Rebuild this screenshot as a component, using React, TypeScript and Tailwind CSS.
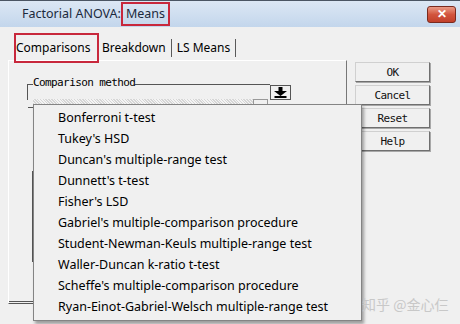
import React from 'react';

const methods = [
  'Bonferroni t-test',
  "Tukey's HSD",
  "Duncan's multiple-range test",
  "Dunnett's t-test",
  "Fisher's LSD",
  "Gabriel's multiple-comparison procedure",
  'Student-Newman-Keuls multiple-range test',
  'Waller-Duncan k-ratio t-test',
  "Scheffe's multiple-comparison procedure",
  'Ryan-Einot-Gabriel-Welsch multiple-range test',
];

// Windows-Knopf mit Monospace-Beschriftung
function DlgButton({ label }: { label: string }) {
  return (
    <div className="w-[75px] h-[20px] flex items-center justify-center bg-[#f0f0f0] border border-[#d0d0d0] border-r-[#6f6f6f] border-b-[#6f6f6f] shadow-[1px_1px_0_#a8a8a8] font-['DejaVu_Sans_Mono',monospace] text-[11px] tracking-[-0.6px] leading-none text-[#111]">
      {label}
    </div>
  );
}

function DropArrow() {
  return (
    <svg width="19" height="13" viewBox="0 0 19 13">
      <rect x="7.5" y="1" width="4" height="4" fill="#000" />
      <polygon points="3,5 16,5 9.5,10" fill="#000" />
      <rect x="3.5" y="10" width="12" height="2" fill="#000" />
    </svg>
  );
}

export default function App() {
  return (
    <div className="relative w-[460px] h-[324px] overflow-hidden bg-[#f0f0f0] font-['Noto_Sans',sans-serif] text-black">
      {/* Titelleiste */}
      <div className="h-[27px] border-t border-[#4b5563] bg-gradient-to-b from-[#dce7f4] to-[#c3d6ec] flex items-center justify-between">
        <div className="pl-[22px] flex items-center text-[12.5px] text-[#1c2a3c] leading-none">
          <span>Factorial ANOVA:</span>
          <span className="h-[24px] px-[3px] flex items-center border-2 border-[#c8283c]">Means</span>
        </div>
        <div className="mr-[4px] w-[29px] h-[17px] rounded-[3px] border border-[#7a2a1e] bg-gradient-to-b from-[#e99a86] via-[#d2553e] to-[#c2402a] flex items-center justify-center text-white text-[12px] font-bold leading-none">
          ✕
        </div>
      </div>

      <div className="flex">
        {/* Linke Seite: Tabs + Panel */}
        <div className="w-[347px]">
          <div className="mt-[6px] h-[30px] flex items-center pl-[14px] text-[12px] leading-none">
            <div className="relative z-10 w-[85px] h-[30px] flex items-center border-2 border-[#c8283c]">
              <span>Comparisons</span>
            </div>
            <span className="ml-[3px]">Breakdown</span>
            <span className="ml-[5px] w-px h-[18px] bg-[#5a5a5a]" />
            <span className="ml-[5px]">LS Means</span>
            <span className="ml-[5px] w-px h-[18px] bg-[#5a5a5a]" />
          </div>

          <div className="-mt-[3px] ml-[8px] w-[339px] h-[244px] border border-white border-r-[#777] border-b-[#555]">
            <div className="mt-[23px] ml-[18px] flex items-start">
              <div className="w-[243px] h-[16px] border-t border-l border-[#555]">
                <div className="-mt-[8px] ml-[5px] w-fit bg-[#f0f0f0] font-['DejaVu_Sans_Mono',monospace] text-[11px] tracking-[-0.6px] leading-[12px]">
                  Comparison method
                </div>
              </div>
              <div className="mt-[1px] w-[21px] h-[15px] border border-[#555] flex items-center justify-center">
                <DropArrow />
              </div>
            </div>
            <div className="ml-[24px] -mt-[1px] flex">
              <div className="w-[220px] h-[5px] bg-[repeating-linear-gradient(45deg,#d6d6d6_0px,#d6d6d6_1px,#f4f4f4_1px,#f4f4f4_2px)]" />
              <div className="w-[15px] h-[5px] border border-b-0 border-[#999]" />
            </div>
            <div className="ml-[19px] mt-[3px] w-[6px] h-px bg-[#555]" />
            <div className="ml-[23px] mt-[63px] w-px h-[91px] bg-[#555]" />
            <div className="mt-[39px] w-[25px] h-px bg-[#555]" />
          </div>
        </div>

        {/* Rechte Seite: Knöpfe */}
        <div className="pl-[8px] pt-[35px] flex flex-col gap-[3px]">
          <DlgButton label="OK" />
          <DlgButton label="Cancel" />
          <DlgButton label="Reset" />
          <DlgButton label="Help" />
        </div>
      </div>

      {/* Aufgeklappte Liste */}
      <div className="absolute left-[33px] top-[104px] w-[329px] h-[217px] bg-[#f0f0f0] border border-[#848484] shadow-[2px_3px_3px_rgba(0,0,0,0.35)] pt-[3px]">
        {methods.map((m) => (
          <div key={m} className="h-[21px] pl-[24px] flex items-center text-[12.5px] leading-none whitespace-nowrap">
            {m}
          </div>
        ))}
      </div>

      {/* Wasserzeichen */}
      <div className="absolute left-[362px] top-[297px] text-[14px] text-[#c8c8c8] font-['Noto_Sans_CJK_SC',sans-serif] leading-none">
        知乎 @金心仨
      </div>
    </div>
  );
}
